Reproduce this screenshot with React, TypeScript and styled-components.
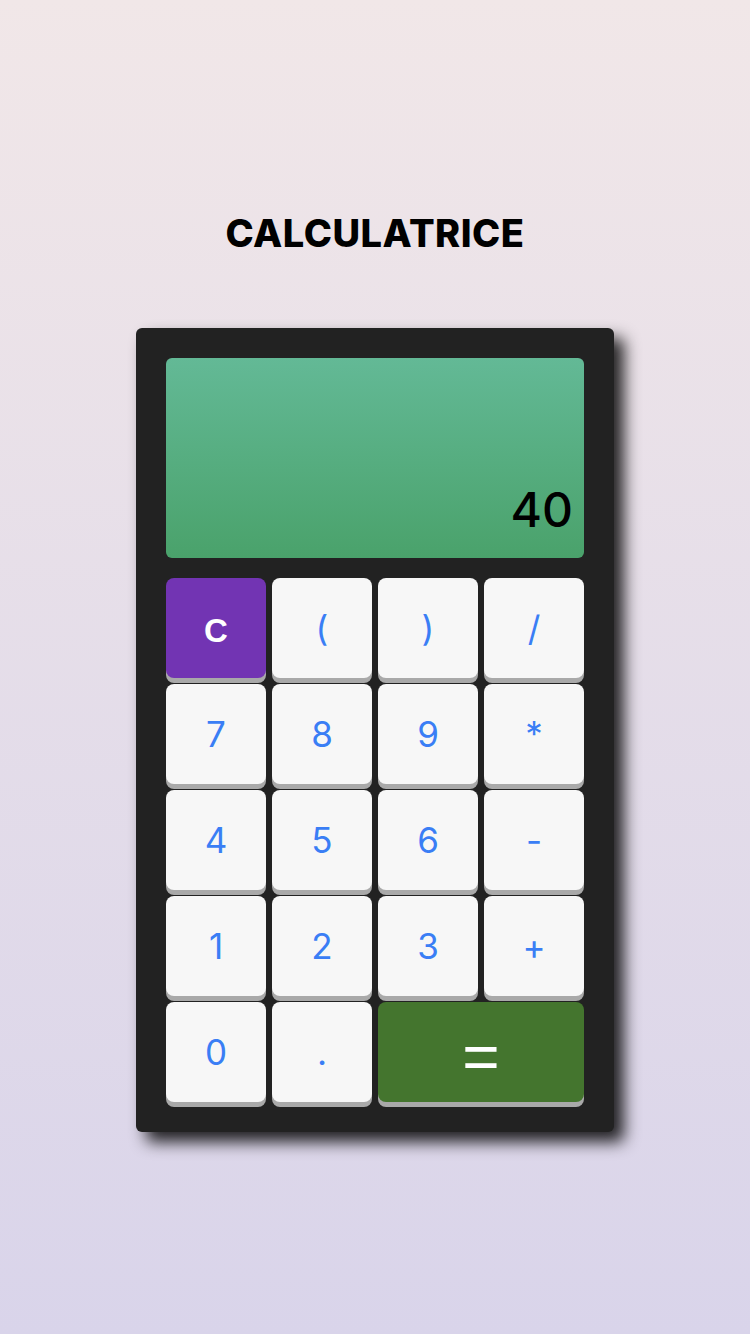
import React from "react";
import styled, { createGlobalStyle } from "styled-components";

const GlobalStyle = createGlobalStyle`
  html, body { margin: 0; padding: 0; }
  body {
    background: linear-gradient(180deg, #f1e7e8 0%, #d9d4ea 100%);
    min-height: 1334px;
  }
  * { box-sizing: border-box; }
`;

const Page = styled.div`
  width: 750px;
  min-height: 1334px;
  display: flex;
  flex-direction: column;
  align-items: center;
  padding-top: 213px;
`;

const Title = styled.h1`
  margin: 0 0 75px;
  font-family: "Inter", "Noto Sans", sans-serif;
  font-weight: 800;
  font-size: 38px;
  line-height: 40px;
  letter-spacing: 0.5px;
  color: #000;
`;

const Body = styled.div`
  width: 478px;
  background: #222222;
  border-radius: 6px;
  padding: 30px;
  box-shadow: 10px 10px 16px rgba(0, 0, 0, 0.85);
  display: flex;
  flex-direction: column;
  gap: 20px;
`;

const Screen = styled.div`
  height: 200px;
  border-radius: 6px;
  background: linear-gradient(180deg, #63b996 0%, #4aa26b 100%);
  display: flex;
  align-items: flex-end;
  justify-content: flex-end;
  padding: 0 11px 22px;
  font-family: "Inter", "Noto Sans", sans-serif;
  font-weight: 500;
  font-size: 48px;
  line-height: 52px;
  color: #000;
`;

const Keys = styled.div`
  display: grid;
  grid-template-columns: repeat(4, 100px);
  grid-auto-rows: 100px;
  gap: 6px;
`;

type Kind = "num" | "clear" | "equal";

const Key = styled.button<{ $kind: Kind; $span?: number }>`
  border: none;
  margin: 0;
  padding: ${(p) => (p.$kind === "equal" ? "10px 0 0" : p.$kind === "clear" ? "4px 0 0" : "0")};
  border-radius: 8px;
  grid-column: span ${(p) => p.$span ?? 1};
  display: flex;
  align-items: center;
  justify-content: center;
  box-shadow: 0 5px 0 #a9a9a9;
  cursor: pointer;
  background: ${(p) =>
    p.$kind === "clear" ? "#7234b3" : p.$kind === "equal" ? "#44752e" : "#f7f7f7"};
  color: ${(p) => (p.$kind === "num" ? "#3a7ef5" : "#ffffff")};
  font-family: ${(p) =>
    p.$kind === "num"
      ? `"Inter", "Noto Sans", sans-serif`
      : `"Liberation Sans", Arial, sans-serif`};
  font-weight: ${(p) => (p.$kind === "clear" ? 700 : p.$kind === "equal" ? 500 : 400)};
  font-size: ${(p) => (p.$kind === "equal" ? "64px" : p.$kind === "clear" ? "33px" : "35px")};
  line-height: 1;
`;

const keys: { label: string; kind: Kind; span?: number }[] = [
  { label: "C", kind: "clear" },
  { label: "(", kind: "num" },
  { label: ")", kind: "num" },
  { label: "/", kind: "num" },
  { label: "7", kind: "num" },
  { label: "8", kind: "num" },
  { label: "9", kind: "num" },
  { label: "*", kind: "num" },
  { label: "4", kind: "num" },
  { label: "5", kind: "num" },
  { label: "6", kind: "num" },
  { label: "-", kind: "num" },
  { label: "1", kind: "num" },
  { label: "2", kind: "num" },
  { label: "3", kind: "num" },
  { label: "+", kind: "num" },
  { label: "0", kind: "num" },
  { label: ".", kind: "num" },
  { label: "=", kind: "equal", span: 2 },
];

export default function App() {
  return (
    <>
      <GlobalStyle />
      <Page>
        <Title>CALCULATRICE</Title>
        <Body>
          <Screen>40</Screen>
          <Keys>
            {keys.map((k) => (
              <Key key={k.label} $kind={k.kind} $span={k.span}>
                {k.label}
              </Key>
            ))}
          </Keys>
        </Body>
      </Page>
    </>
  );
}
